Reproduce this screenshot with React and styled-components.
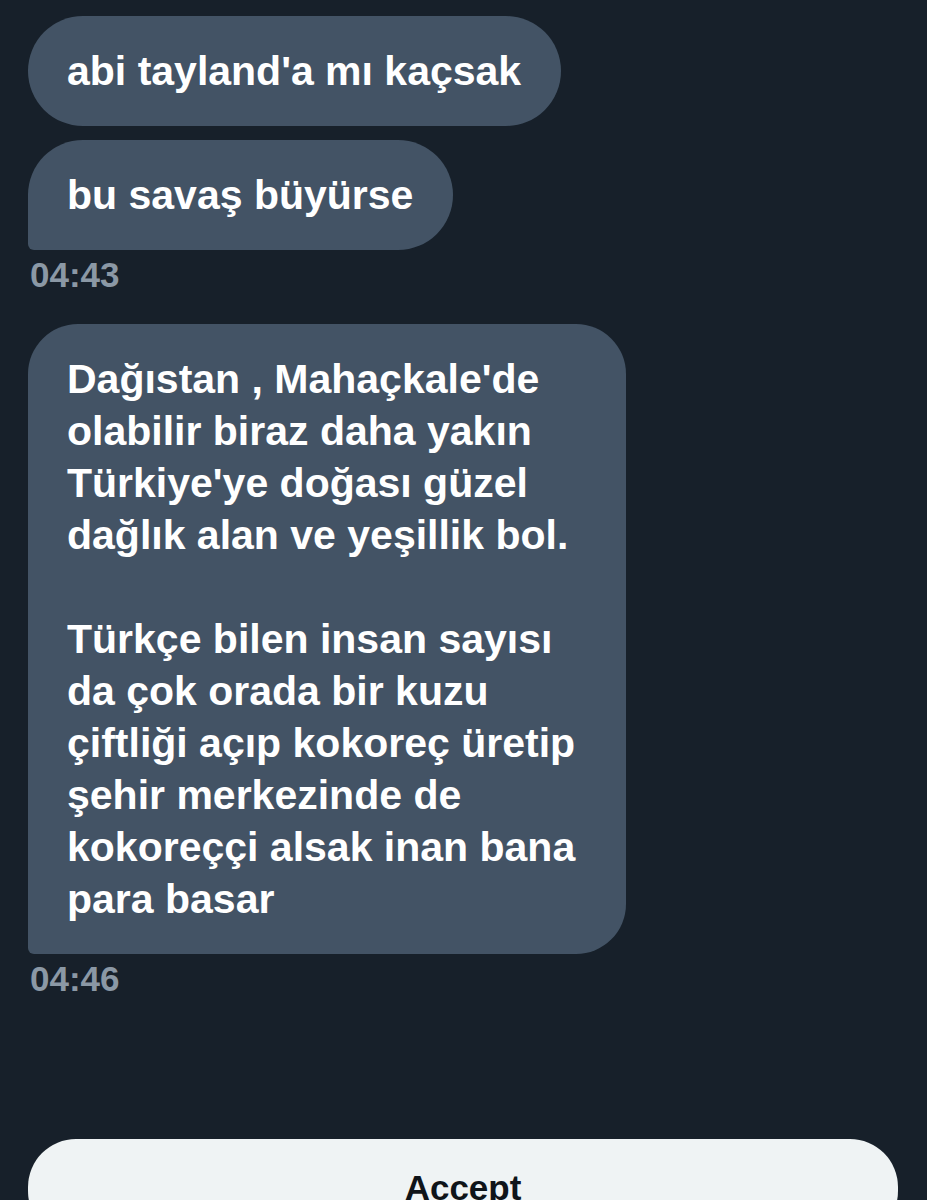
import React from "react";
import styled, { createGlobalStyle } from "styled-components";

const Global = createGlobalStyle`
  html, body { margin: 0; padding: 0; background: #17202a; }
  body { font-family: "Liberation Sans", Arial, sans-serif; -webkit-font-smoothing: antialiased; }
`;

const Screen = styled.div`
  width: 927px;
  height: 1200px;
  overflow: hidden;
  background: #17202a;
  display: flex;
  flex-direction: column;
  box-sizing: border-box;
  padding: 16px 28px 0 28px;
`;

const Group = styled.div`
  display: flex;
  flex-direction: column;
  align-items: flex-start;
  gap: 14px;
  margin-bottom: ${(p) => p.$mb || 0}px;
`;

const Bubble = styled.div`
  background: #435365;
  color: #ffffff;
  font-weight: 700;
  font-size: 41px;
  line-height: 52px;
  padding: 29px 40px 29px 39px;
  border-radius: ${(p) => (p.$last ? `${p.$r}px ${p.$r}px ${p.$r}px 6px` : `${p.$r}px`)};
  white-space: pre;
  box-sizing: border-box;
  width: ${(p) => (p.$w ? `${p.$w}px` : "auto")};
`;

const Time = styled.div`
  color: #8b98a5;
  font-weight: 700;
  font-size: 35px;
  line-height: 38px;
  margin-top: -8px;
  padding-left: 2px;
`;

const Spacer = styled.div`
  flex: 1;
`;

const AcceptButton = styled.button`
  display: flex;
  justify-content: center;
  align-items: flex-start;
  width: 870px;
  height: 100px;
  margin-bottom: -39px;
  border: none;
  border-radius: 48px;
  background: #eff3f4;
  color: #0f1419;
  font-family: "Liberation Sans", Arial, sans-serif;
  font-weight: 700;
  font-size: 35px;
  padding-top: 29px;
  box-sizing: border-box;
`;

export default function App() {
  return (
    <>
      <Global />
      <Screen>
        <Group $mb={30}>
          <Bubble $r={55}>abi tayland'a mı kaçsak</Bubble>
          <Bubble $r={55} $last>bu savaş büyürse</Bubble>
          <Time>04:43</Time>
        </Group>
        <Group>
          <Bubble $r={50} $last $w={598}>
            {`Dağıstan , Mahaçkale'de
olabilir biraz daha yakın
Türkiye'ye doğası güzel
dağlık alan ve yeşillik bol.

Türkçe bilen insan sayısı
da çok orada bir kuzu
çiftliği açıp kokoreç üretip
şehir merkezinde de
kokoreççi alsak inan bana
para basar`}
          </Bubble>
          <Time>04:46</Time>
        </Group>
        <Spacer />
        <AcceptButton>Accept</AcceptButton>
      </Screen>
    </>
  );
}
